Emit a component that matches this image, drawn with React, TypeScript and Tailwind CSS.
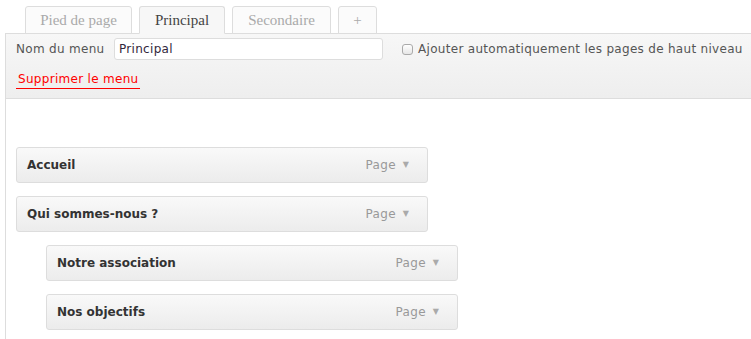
import React from "react";

const tabs = [
  { label: "Pied de page", active: false, w: "w-[107px]" },
  { label: "Principal", active: true, w: "w-[86px]" },
  { label: "Secondaire", active: false, w: "w-[99px]" },
  { label: "+", active: false, w: "w-[39px]" },
];

const items = [
  { label: "Accueil", depth: 0 },
  { label: "Qui sommes-nous ?", depth: 0 },
  { label: "Notre association", depth: 1 },
  { label: "Nos objectifs", depth: 1 },
];

function MenuItem({ label, depth }: { label: string; depth: number }) {
  return (
    <div className={depth ? "pl-[30px]" : ""}>
      <div className="w-[412px] h-[36px] flex items-center justify-between pl-[10px] pr-[18px] rounded-[3px] border border-[#dddddd] bg-gradient-to-b from-[#f9f9f9] to-[#ececec]">
        <span className="text-[12px] font-bold text-[#333333]">{label}</span>
        <span className="flex items-center gap-[7px]">
          <span className="text-[12px] tracking-[0.3px] text-[#999999]">Page</span>
          <span className="text-[8px] text-[#aaaaaa] leading-none">▼</span>
        </span>
      </div>
    </div>
  );
}

export default function App() {
  return (
    <div className="w-[751px] h-[339px] overflow-hidden bg-white pt-[6px] pl-[5px]" style={{ fontFamily: '"DejaVu Sans", sans-serif' }}>
      {/* Tabs */}
      <div className="flex gap-[7px] pl-[20px] relative z-10">
        {tabs.map(t => (
          <div
            key={t.label}
            className={`${t.w} h-[28px] -mb-px flex items-center justify-center rounded-t-[3px] border border-[#dddddd] text-[15px] ${
              t.active ? "bg-[#f7f7f7] border-b-[#f7f7f7] text-[#444444]" : "bg-[#fbfbfb] text-[#aaaaaa]"
            }`}
            style={{ fontFamily: '"Liberation Serif", serif' }}
          >
            {t.label}
          </div>
        ))}
      </div>

      {/* Panel */}
      <div className="border-l border-t border-[#dddddd] h-[320px]">
        <div className="h-[65px] bg-gradient-to-b from-[#f7f7f7] to-[#eeeeee] border-b border-[#dddddd] pl-[10px] pt-[4px] tracking-[0.3px]">
          <div className="flex items-center h-[22px]">
            <span className="text-[12px] text-[#555555] w-[98px]">Nom du menu</span>
            <div className="w-[269px] h-[22px] rounded-[3px] border border-[#dddddd] bg-white flex items-center pl-[4px] text-[12px] text-[#32273c]">
              Principal
            </div>
            <div className="flex items-center ml-[19px]">
              <span className="w-[11px] h-[11px] rounded-[3px] border border-[#aaaaaa] bg-gradient-to-b from-white to-[#e6e6e6]" />
              <span className="ml-[5px] text-[12px] text-[#555555] whitespace-nowrap">Ajouter automatiquement les pages de haut niveau</span>
            </div>
          </div>
          <div className="mt-[10px] flex">
            <span className="px-[2px] border-b border-[#ff0000] text-[12px] text-[#ff0000] leading-[18px]">
              Supprimer le menu
            </span>
          </div>
        </div>

        <div className="pt-[48px] pl-[10px] flex flex-col gap-[13px]">
          {items.map(i => (
            <MenuItem key={i.label} label={i.label} depth={i.depth} />
          ))}
        </div>
      </div>
    </div>
  );
}
